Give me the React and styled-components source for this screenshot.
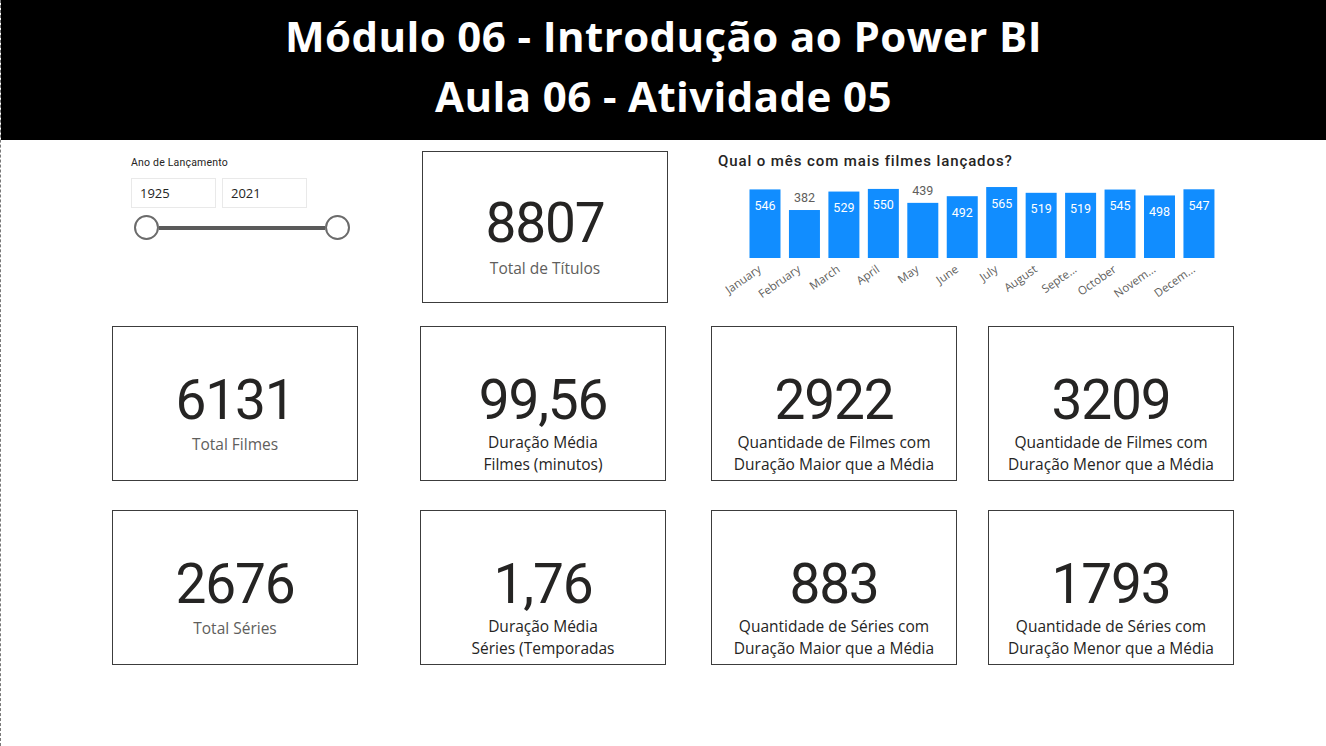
import React from "react";
import styled, { createGlobalStyle } from "styled-components";

const Global = createGlobalStyle`
  html, body { margin: 0; padding: 0; background: #ffffff; }
  body { overflow: hidden; }
  * { box-sizing: border-box; }
`;

const Page = styled.div`
  width: 1326px;
  height: 746px;
  background: #ffffff;
  border-left: 1px dashed #7a7a7a;
  display: flex;
  flex-direction: column;
  overflow: hidden;
`;

const Header = styled.header`
  height: 140px;
  background: #000000;
  padding-top: 6px;
  display: flex;
  flex-direction: column;
  align-items: center;
`;

const HeaderLine = styled.h1`
  margin: 0;
  font-family: "Open Sans", "Noto Sans", sans-serif;
  font-weight: 700;
  font-size: 42px;
  line-height: 60px;
  letter-spacing: 0.4px;
  color: #ffffff;
  white-space: nowrap;
`;

const TopRow = styled.section`
  display: grid;
  grid-template-columns: 291px 296px 1fr;
  align-items: start;
  padding-left: 130px;
  padding-top: 11px;
`;

const Slicer = styled.div`
  display: flex;
  flex-direction: column;
  padding-top: 5px;
`;

const SlicerLabel = styled.div`
  font-family: Roboto, "Noto Sans", sans-serif;
  font-size: 10.5px;
  line-height: 14px;
  letter-spacing: 0.2px;
  color: #252423;
`;

const InputRow = styled.div`
  display: flex;
  gap: 6px;
  margin-top: 8px;
`;

const RangeInput = styled.div`
  width: 85px;
  height: 30px;
  border: 1px solid #e9e9e9;
  padding-left: 8px;
  display: flex;
  align-items: center;
  font-family: "Open Sans", "Noto Sans", sans-serif;
  font-size: 13px;
  color: #252423;
`;

const SliderRow = styled.div`
  display: flex;
  align-items: center;
  width: 216px;
  margin-left: 3px;
  margin-top: 7px;
`;

const Handle = styled.div`
  width: 25px;
  height: 25px;
  border-radius: 50%;
  border: 2px solid #6b6b6b;
  background: #ffffff;
  flex: none;
`;

const Track = styled.div`
  flex: 1;
  height: 4px;
  background: #5a5a5a;
`;

const Card = styled.div`
  width: ${(p) => p.$w || 246}px;
  height: ${(p) => p.$h || 155}px;
  border: 1px solid #3c3c3c;
  display: flex;
  flex-direction: column;
  align-items: center;
  padding-top: ${(p) => p.$pad || 46}px;
  background: #ffffff;
`;

const Value = styled.div`
  font-family: Roboto, "Noto Sans", sans-serif;
  font-weight: 400;
  font-size: 55px;
  line-height: 55px;
  letter-spacing: -1.2px;
  color: #252423;
  white-space: nowrap;
`;

const Label = styled.div`
  margin-top: ${(p) => (p.$gap ? p.$gap : p.$muted ? 5 : 3)}px;
  font-family: "Open Sans", "Noto Sans", sans-serif;
  font-size: 15.5px;
  line-height: 22px;
  color: ${(p) => (p.$muted ? "#605e5c" : "#252423")};
  text-align: center;
  white-space: pre-line;
`;

const Chart = styled.div`
  display: flex;
  flex-direction: column;
`;

const ChartTitle = styled.div`
  font-family: Roboto, "Noto Sans", sans-serif;
  font-weight: 500;
  font-size: 15px;
  line-height: 20px;
  letter-spacing: 0.9px;
  color: #252423;
`;

const ChartSvg = styled.svg`
  display: block;
  overflow: visible;
`;

const CardGrid = styled.section`
  display: grid;
  grid-template-columns: 308px 291px 277px 246px;
  row-gap: 29px;
  padding-left: 111px;
  margin-top: 20px;
`;

const months = [
  ["January", 546],
  ["February", 382],
  ["March", 529],
  ["April", 550],
  ["May", 439],
  ["June", 492],
  ["July", 565],
  ["August", 519],
  ["Septe...", 519],
  ["October", 545],
  ["Novem...", 498],
  ["Decem...", 547],
];

function BarChart() {
  const base = 87;
  const x0 = 31.5;
  const pitch = 39.45;
  const bw = 31;
  return (
    <ChartSvg width="510" height="135" viewBox="0 0 510 135">
      {months.map(([m, v], i) => {
        const h = v * 0.1256;
        const x = x0 + i * pitch;
        const top = base - h;
        const cx = x + bw / 2;
        const inside = v >= 450;
        return (
          <g key={m}>
            <rect x={x} y={top} width={bw} height={h} fill="#118dff" />
            <text
              x={cx}
              y={inside ? top + 20.5 : top - 8}
              textAnchor="middle"
              fontFamily="Roboto, 'Noto Sans', sans-serif"
              fontSize="12.5"
              fill={inside ? "#ffffff" : "#605e5c"}
            >
              {v}
            </text>
            <text
              x={cx - 3}
              y={base + 13}
              textAnchor="end"
              transform={`rotate(-35 ${cx - 3} ${base + 13})`}
              fontFamily="'Open Sans', 'Noto Sans', sans-serif"
              fontSize="11.5"
              fill="#605e5c"
            >
              {m}
            </text>
          </g>
        );
      })}
    </ChartSvg>
  );
}

const cards = [
  { v: "6131", l: "Total Filmes", muted: true },
  { v: "99,56", l: "Duração Média\nFilmes (minutos)" },
  { v: "2922", l: "Quantidade de Filmes com\nDuração Maior que a Média" },
  { v: "3209", l: "Quantidade de Filmes com\nDuração Menor que a Média" },
  { v: "2676", l: "Total Séries", muted: true },
  { v: "1,76", l: "Duração Média\nSéries (Temporadas" },
  { v: "883", l: "Quantidade de Séries com\nDuração Maior que a Média" },
  { v: "1793", l: "Quantidade de Séries com\nDuração Menor que a Média" },
];

export default function App() {
  return (
    <>
      <Global />
      <Page>
        <Header>
          <HeaderLine>Módulo 06 - Introdução ao Power BI</HeaderLine>
          <HeaderLine>Aula 06 - Atividade 05</HeaderLine>
        </Header>
        <TopRow>
          <Slicer>
            <SlicerLabel>Ano de Lançamento</SlicerLabel>
            <InputRow>
              <RangeInput>1925</RangeInput>
              <RangeInput>2021</RangeInput>
            </InputRow>
            <SliderRow>
              <Handle />
              <Track />
              <Handle />
            </SliderRow>
          </Slicer>
          <Card $h={152} $pad={44}>
            <Value>8807</Value>
            <Label $muted $gap={6}>Total de Títulos</Label>
          </Card>
          <Chart>
            <ChartTitle>Qual o mês com mais filmes lançados?</ChartTitle>
            <BarChart />
          </Chart>
        </TopRow>
        <CardGrid>
          {cards.map((c) => (
            <Card key={c.v}>
              <Value>{c.v}</Value>
              <Label $muted={c.muted}>{c.l}</Label>
            </Card>
          ))}
        </CardGrid>
      </Page>
    </>
  );
}
